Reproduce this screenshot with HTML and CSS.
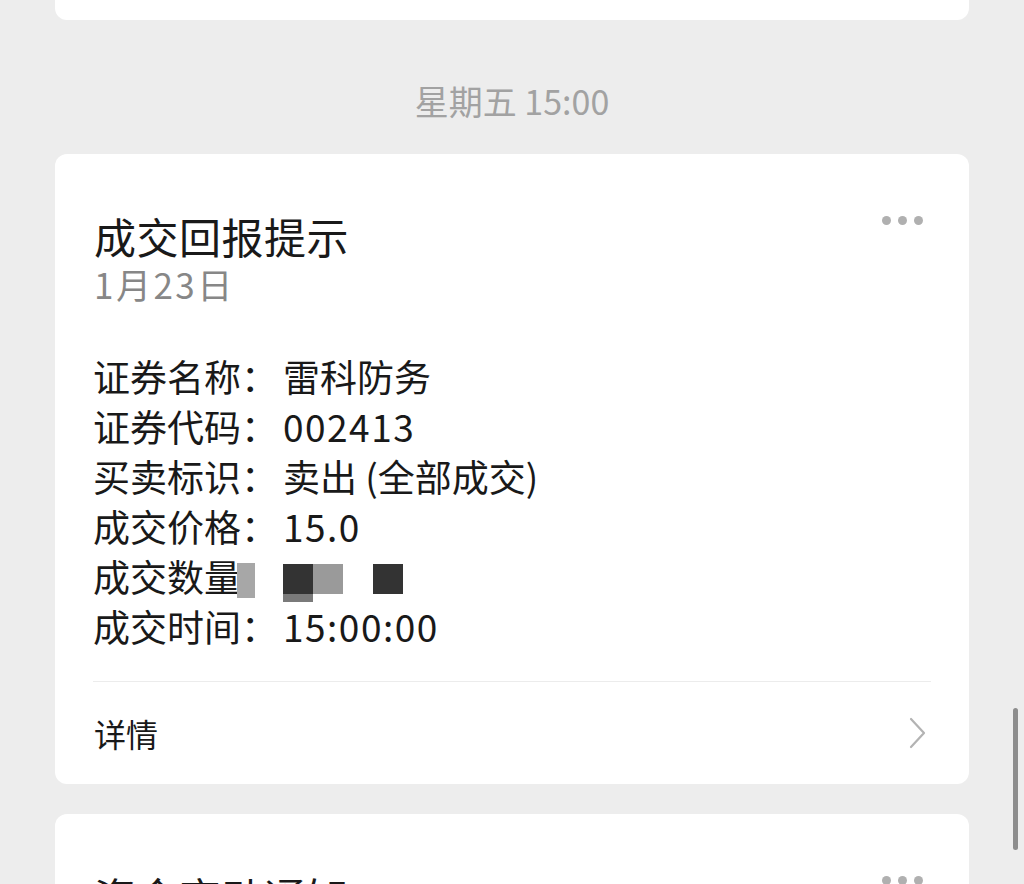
FILE: index.html
```html
<!DOCTYPE html>
<html lang="zh-CN">
<head>
    <meta charset="UTF-8">
    <meta name="viewport" content="width=device-width, initial-scale=1.0">
    <title>成交回报提示</title>
    <link rel="stylesheet" href="styles.css">
</head>
<body>
    <div class="feed">
        <div class="card card-cut"></div>

        <div class="stamp">星期五 15:00</div>

        <div class="card">
            <div class="more"><span></span><span></span><span></span></div>
            <div class="card-body">
                <h2 class="title">成交回报提示</h2>
                <div class="date">1月23日</div>
                <div class="rows">
                    <div class="row"><span class="label">证券名称：</span><span class="value">雷科防务</span></div>
                    <div class="row"><span class="label">证券代码：</span><span class="value num">002413</span></div>
                    <div class="row"><span class="label">买卖标识：</span><span class="value">卖出 (全部成交)</span></div>
                    <div class="row"><span class="label">成交价格：</span><span class="value num">15.0</span></div>
                    <div class="row">
                        <span class="label">成交数量：</span>
                        <span class="mosaic">
                            <span class="px px-a"></span>
                            <span class="px px-b"></span>
                            <span class="px px-c"></span>
                            <span class="px px-d"></span>
                            <span class="px px-e"></span>
                        </span>
                    </div>
                    <div class="row"><span class="label">成交时间：</span><span class="value num">15:00:00</span></div>
                </div>
            </div>
            <div class="card-foot">
                <span>详情</span>
                <svg class="chevron" width="18" height="32" viewBox="0 0 18 32">
                    <path d="M2 2 L15 16 L2 30" fill="none" stroke="#b3b3b3" stroke-width="2.2" stroke-linecap="round" stroke-linejoin="round"/>
                </svg>
            </div>
        </div>

        <div class="card">
            <div class="more"><span></span><span></span><span></span></div>
            <div class="card-body">
                <h2 class="title">资金变动通知</h2>
            </div>
        </div>
    </div>
    <div class="scrollbar"></div>
</body>
</html>
```

FILE: styles.css
```css
html, body {
    height: 884px;
    overflow: hidden;
}
body {
    margin: 0;
    padding: 0;
    background: #ededed;
    font-family: "Noto Sans CJK SC", "Noto Sans", sans-serif;
    color: #191919;
}
.feed {
    padding: 0 55px;
}
.card {
    position: relative;
    background: #fff;
    border-radius: 12px;
    margin-bottom: 30px;
}
.card-cut {
    height: 60px;
    margin-top: -40px;
    margin-bottom: 0;
}
.stamp {
    box-sizing: border-box;
    height: 134px;
    padding-top: 28px;
    line-height: 106px;
    text-align: center;
    font-size: 34px;
    color: #a2a2a2;
}
.card-body {
    padding: 56px 38px 0 38px;
}
.title {
    margin: 0;
    font-size: 42px;
    font-weight: normal;
    line-height: 52px;
    padding-left: 1px;
    letter-spacing: 0.5px;
}
.date {
    font-size: 35px;
    line-height: 44px;
    color: #878787;
    padding-left: 1px;
    letter-spacing: 2.5px;
}
.rows {
    margin-top: 45px;
    padding-bottom: 30px;
    border-bottom: 1px solid #ececec;
}
.row {
    position: relative;
    font-size: 37px;
    line-height: 50px;
    white-space: nowrap;
}
.value {
    margin-left: 5px;
}
.num {
    letter-spacing: 1.5px;
}
.mosaic {
    position: absolute;
    left: 0;
    top: 0;
    width: 320px;
    height: 50px;
}
.px {
    position: absolute;
    display: block;
}
.px-a {
    left: 144px;
    top: 12px;
    width: 18px;
    height: 35px;
    background: #a7a7a7;
}
.px-b {
    left: 190px;
    top: 13px;
    width: 30px;
    height: 30px;
    background: #333;
}
.px-c {
    left: 220px;
    top: 13px;
    width: 30px;
    height: 30px;
    background: #9a9a9a;
}
.px-d {
    left: 190px;
    top: 43px;
    width: 30px;
    height: 8px;
    background: #7a7a7a;
}
.px-e {
    left: 280px;
    top: 13px;
    width: 30px;
    height: 30px;
    background: #333;
}
.card-foot {
    display: flex;
    align-items: center;
    justify-content: space-between;
    height: 102px;
    padding: 0 42px 0 39px;
    font-size: 32px;
}
.chevron {
    display: block;
}
.more {
    position: absolute;
    top: 62px;
    right: 46px;
    display: flex;
    gap: 7px;
}
.more span {
    width: 9px;
    height: 9px;
    border-radius: 50%;
    background: #b0b0b0;
}
.scrollbar {
    position: fixed;
    left: 1013px;
    top: 708px;
    width: 5px;
    height: 142px;
    border-radius: 3px;
    background: #8d8d8d;
}
```
